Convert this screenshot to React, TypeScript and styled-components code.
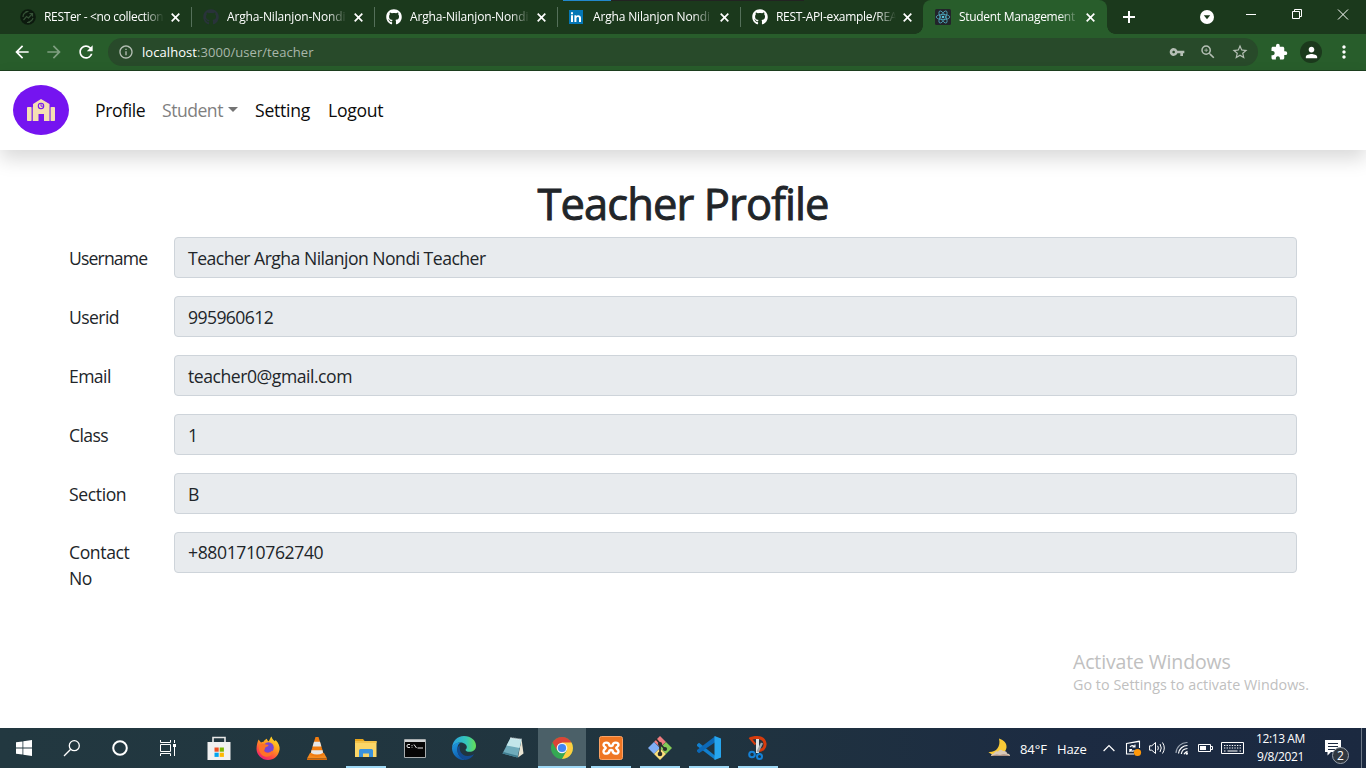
import React from "react";
import styled, { createGlobalStyle } from "styled-components";
import { FaGithub } from "react-icons/fa";
import {
  MdArrowBack, MdArrowForward, MdRefresh, MdInfoOutline, MdVpnKey, MdZoomIn,
  MdStarBorder, MdExtension, MdPerson, MdMoreVert,
} from "react-icons/md";

const Global = createGlobalStyle`
  * { box-sizing: border-box; }
  body { margin: 0; background: #fff; overflow: hidden; font-family: "Open Sans", "Noto Sans", sans-serif; }
  svg { display: block; flex: none; }
`;

const Screen = styled.div`
  width: 1366px;
  height: 768px;
  display: flex;
  flex-direction: column;
  overflow: hidden;
  position: relative;
`;

/* ---------- browser ---------- */

const TabStrip = styled.div`
  height: 34px;
  flex: none;
  display: flex;
  padding-left: 9px;
  background: #1b391c;
  position: relative;
`;

const TopEdge = styled.div`
  position: absolute;
  top: 0;
  left: 563px;
  width: 241px;
  height: 1px;
  background: linear-gradient(90deg, #2288cc 48px, #222322 48px);
`;

const TabBox = styled.div<{ $active?: boolean }>`
  width: 183px;
  height: 34px;
  display: flex;
  align-items: center;
  padding: 0 9px 0 11px;
  position: relative;
  color: #fff;
  ${(p) => p.$active && `
    width: 184px;
    background: #285d2b;
    border-radius: 8px 8px 0 0;
    margin-left: -1px;
    padding-left: 12px;
    &::before, &::after {
      content: ""; position: absolute; bottom: 0; width: 8px; height: 8px;
    }
    &::before { left: -8px; background: radial-gradient(circle at 0 0, transparent 7.5px, #285d2b 8px); }
    &::after { right: -8px; background: radial-gradient(circle at 8px 0, transparent 7.5px, #285d2b 8px); }
  `}
`;

const TabDivider = styled.div`
  position: absolute;
  right: 0;
  top: 7px;
  width: 1px;
  height: 20px;
  background: #55705a;
`;

const TabIcon = styled.div`
  width: 16px;
  height: 16px;
  margin-right: 8px;
  flex: none;
`;

const TabTitle = styled.div<{ $spacing: number }>`
  width: 125px;
  margin-right: 2px;
  flex: none;
  font-size: 12px;
  line-height: 16px;
  letter-spacing: ${(p) => p.$spacing}px;
  white-space: nowrap;
  -webkit-mask-image: linear-gradient(90deg, #000 100px, transparent 120px);
  mask-image: linear-gradient(90deg, #000 100px, transparent 120px);
`;

const NewTab = styled.svg`
  margin: 11px 0 0 16px;
`;

const WindowControls = styled.div`
  margin-left: auto;
  display: flex;
  padding-right: 16px;
`;

const Toolbar = styled.div`
  height: 37px;
  flex: none;
  display: flex;
  align-items: center;
  gap: 12px;
  background: #285d2b;
  border-bottom: 1px solid #1d401f;
  color: #fff;
  padding: 0 12px;
`;

const AddressBar = styled.div`
  width: 1150px;
  height: 28px;
  border-radius: 14px;
  background: #284a2a;
  display: flex;
  align-items: center;
  gap: 14px;
  padding: 0 9px 0 10px;
  color: #b5bfb5;
`;

const Url = styled.div`
  margin-left: -6px;
  font-size: 13px;
  letter-spacing: 0.06px;
  flex: 1;
  color: #a9b7aa;
  b { font-weight: 400; color: #fff; }
`;

const Avatar = styled.div`
  width: 22px;
  height: 22px;
  border-radius: 50%;
  background: #1b391c;
  display: flex;
  align-items: center;
  justify-content: center;
`;

/* ---------- page ---------- */

const Page = styled.main`
  flex: 1;
  background: #fff;
  color: #212529;
`;

const Navbar = styled.nav`
  height: 79px;
  display: flex;
  align-items: center;
  padding: 0 0 2px 13px;
  box-shadow: 0 9px 18px rgba(0, 0, 0, 0.15);
`;

const NavItem = styled.a<{ $muted?: boolean; $width: number; $spacing: number }>`
  width: ${(p) => p.$width}px;
  font-size: 17.6px;
  line-height: 26px;
  white-space: nowrap;
  letter-spacing: ${(p) => p.$spacing}px;
  color: ${(p) => (p.$muted ? "#7f7f7f" : "#0b0b0b")};
  display: flex;
  align-items: center;
`;

const Caret = styled.span`
  border: 5.5px solid transparent;
  border-top-color: #747474;
  border-bottom: 0;
  margin-left: 5px;
`;

const Title = styled.h1`
  margin: 28px 0 7px;
  height: 52px;
  text-align: center;
  font-size: 43.5px;
  line-height: 52px;
  font-weight: 400;
  -webkit-text-stroke: 0.9px #212529;
  letter-spacing: -0.9px;
`;

const Form = styled.form`
  padding: 0 69px;
  font-size: 17.6px;
`;

const Row = styled.div`
  display: flex;
  height: 41px;
  margin-bottom: 18px;
`;

const Label = styled.label<{ $spacing: number; $raise?: boolean }>`
  width: 105px;
  padding: ${(p) => (p.$raise ? 7 : 8)}px 26px 0 0;
  line-height: 26px;
  letter-spacing: ${(p) => p.$spacing}px;
`;

const Field = styled.div<{ $spacing: number; $raise?: boolean }>`
  flex: 1;
  height: 41px;
  padding: ${(p) => (p.$raise ? 6 : 7)}px 13px;
  line-height: 26px;
  border: 1px solid #ced4da;
  border-radius: 4px;
  background: #e8ebee;
  letter-spacing: ${(p) => p.$spacing}px;
`;

const Watermark = styled.div`
  position: absolute;
  left: 1073px;
  top: 650px;
  color: #c0c0c0;
  font-size: 19.5px;
  line-height: 24px;
  letter-spacing: -0.15px;
  white-space: nowrap;
  small { display: block; font-size: 14.3px; line-height: 21px; letter-spacing: 0.05px; }
`;

/* ---------- taskbar ---------- */

const Taskbar = styled.footer`
  height: 40px;
  flex: none;
  display: flex;
  background: linear-gradient(90deg, #223840 0%, #20343f 50%, #1c2b42 78%, #1b2940 100%);
`;

const TaskButton = styled.div<{ $open?: boolean; $active?: boolean; $app?: boolean }>`
  width: ${(p) => (p.$app ? 49 : 48)}px;
  padding-right: ${(p) => (p.$app ? 1 : 0)}px;
  height: 40px;
  display: flex;
  align-items: center;
  justify-content: center;
  position: relative;
  background: ${(p) => (p.$active ? "linear-gradient(90deg, #4b6068 48px, transparent 48px)" : "transparent")};
  &::after {
    content: "";
    display: ${(p) => (p.$open ? "block" : "none")};
    position: absolute;
    bottom: 0;
    left: ${(p) => (p.$active ? 0 : 4)}px;
    right: ${(p) => (p.$active ? 1 : 5)}px;
    height: 2px;
    background: #9ed8f5;
  }
`;

const AppList = styled.div`
  display: flex;
  margin-left: 3px;
`;

const Tray = styled.div`
  margin-left: auto;
  display: flex;
  align-items: center;
  color: #fff;
  font-size: 13px;
`;

const TrayText = styled.span<{ $width: number; $spacing: number }>`
  width: ${(p) => p.$width}px;
  letter-spacing: ${(p) => p.$spacing}px;
  white-space: nowrap;
  padding-top: 1px;
`;

const TraySlot = styled.div<{ $width: number }>`
  width: ${(p) => p.$width}px;
  display: flex;
  justify-content: center;
`;

const Clock = styled.div`
  width: 68px;
  padding-right: 5px;
  text-align: center;
  font-size: 12px;
  line-height: 18px;
  letter-spacing: -0.4px;
`;

const Notice = styled.div`
  width: 44px;
  height: 40px;
  position: relative;
  padding: 12px 0 0 8px;
`;

const Badge = styled.div`
  position: absolute;
  left: 15px;
  top: 19px;
  width: 17px;
  height: 17px;
  border-radius: 50%;
  border: 1px solid #9aa3ad;
  background: #30373f;
  font-size: 12px;
  line-height: 15px;
  text-align: center;
`;

const DesktopEdge = styled.div`
  width: 5px;
  height: 40px;
  border-left: 1px solid #6d7887;
`;

/* ---------- drawings ---------- */

const CloseGlyph = () => (
  <svg width="9" height="9" viewBox="0 0 9 9" fill="none" stroke="#fff" strokeWidth="1.7">
    <path d="M.7.700l7.600 7.600M8.300.700L.7 8.300" />
  </svg>
);

const Rester = () => (
  <svg width="16" height="16" viewBox="0 0 16 16">
    <circle cx="8" cy="8" r="7.8" fill="#0c1a0e" />
    <g fill="none" stroke="#365237" strokeWidth="1.2">
      <path d="M3.500 11L6.500 7.500l2 1.500L12 5M9.500 4.500h3v3M3 8q0-4 4.500-5.300M13 9q-1 3.500-5 4.300M5.500 2.500h3M7 13.500h3" />
    </g>
  </svg>
);

const LinkedIn = () => (
  <svg width="16" height="16" viewBox="0 -1 16 16">
    <path fill="#0477b5" d="M0 0h14v14H0z" />
    <path fill="#fff" d="M2 5.3h2V12H2zM2 2.2h2v2H2zM5.400 5.300h1.900v.9c.9-1.500 4.700-1.700 4.700 1.800v4h-2V8.500c0-2.200-2.600-1.900-2.600 0V12h-2z" />
  </svg>
);

const ReactMark = () => (
  <svg width="16" height="16" viewBox="0 0 16 16">
    <rect width="16" height="16" rx="1.5" fill="#22242a" />
    <g fill="none" stroke="#4fa9bf" strokeWidth="0.8">
      <ellipse cx="8" cy="8" rx="6.8" ry="2.6" />
      <ellipse cx="8" cy="8" rx="6.8" ry="2.6" transform="rotate(60 8 8)" />
      <ellipse cx="8" cy="8" rx="6.8" ry="2.6" transform="rotate(120 8 8)" />
    </g>
    <circle cx="8" cy="8" r="1.3" fill="#58c4dc" />
  </svg>
);

const WindowGlyphs = () => (
  <svg width="150" height="34" viewBox="0 0 150 34">
    <circle cx="7" cy="17" r="7" fill="#fff" />
    <path d="M3.800 15.200h6.400l-3.200 4z" fill="#1b391c" />
    <g fill="none" stroke="#fff" strokeWidth="1">
      <path d="M46 14.500h10M92.500 11.500h7v7h-7zM94.500 11.500v-2h7v7h-2M138 9.500l10 10M148 9.500l-10 10" />
    </g>
  </svg>
);

const SchoolLogo = styled.svg`
  margin-right: 26px;
`;

const School = () => (
  <SchoolLogo width="56" height="50" viewBox="0 0 56 50">
    <ellipse cx="28" cy="25" rx="28" ry="25" fill="#7514f0" />
    <g fill="#f5deb3">
      <path d="M20 19L28 14l8.500 5V36H31v-7h-5.500v7H20z" />
      <rect x="14" y="22" width="4.600" height="14" rx="0.8" />
      <rect x="37.600" y="22" width="4.400" height="14" rx="0.8" />
    </g>
    <path d="M19.200 22v14M37 22v14" stroke="#ad7dd0" strokeWidth="0.7" />
    <circle cx="28" cy="21" r="2.700" fill="#f5deb3" stroke="#7514f0" strokeWidth="1.100" />
    <path d="M28 19v2.200h1.900" fill="none" stroke="#7514f0" strokeWidth="0.9" />
  </SchoolLogo>
);

const WindowsLogo = () => (
  <svg width="16" height="16" viewBox="0 0 16 16" fill="#fff">
    <path d="M0 2.300l6.500-.9v6.200H0zM7.300 1.300L16 0v7.600H7.300zM0 8.400h6.500v6.200L0 13.700zM7.300 8.400H16V16l-8.700-1.300z" />
  </svg>
);
const SearchGlyph = () => (
  <svg width="18" height="18" viewBox="0 0 18 18" fill="none" stroke="#fff" strokeWidth="1.300">
    <circle cx="11.300" cy="6.700" r="5" /><path d="M7.700 10.300L1 17" />
  </svg>
);
const CortanaGlyph = () => (
  <svg width="18" height="18" viewBox="0 0 18 18"><circle cx="9" cy="9" r="6.800" fill="none" stroke="#fff" strokeWidth="2" /></svg>
);
const TaskViewGlyph = () => (
  <svg width="16" height="16" viewBox="0 0 16 16" fill="none" stroke="#fff" strokeWidth="1">
    <path d="M.5 0v2.500h10V0M.5 4.500h10v7H.5zM.5 16v-2.500h10V16M14.500 0v3M14.500 7v9" />
    <path d="M13 4h3v3h-3z" fill="#fff" stroke="none" />
  </svg>
);
const StoreIcon = () => (
  <svg width="24" height="26" viewBox="0 0 24 26">
    <path d="M6 9V2.500h12V9" fill="none" stroke="#e8e8e8" strokeWidth="1.600" />
    <path d="M0.500 7h23v18h-23z" fill="#f1f1f1" />
    <path d="M7.500 12.500h4.200v4.200H7.500z" fill="#f04f22" /><path d="M12.700 12.500h4.200v4.200h-4.200z" fill="#7db700" />
    <path d="M7.500 17.700h4.200v4.200H7.500z" fill="#03a4ee" /><path d="M12.700 17.700h4.200v4.200h-4.200z" fill="#fdb900" />
  </svg>
);
const FirefoxIcon = () => (
  <svg width="24" height="24" viewBox="0 0 24 24">
    <defs>
      <linearGradient id="fx" x1="0.800" y1="0" x2="0.200" y2="1">
        <stop offset="0" stopColor="#ffe226" /><stop offset="0.400" stopColor="#ff9a1f" />
        <stop offset="0.720" stopColor="#ff4a42" /><stop offset="1" stopColor="#e31587" />
      </linearGradient>
    </defs>
    <path d="M2.500 3.500L5 6.500c.8-.5 1.700-.7 2.500-.7C8.500 4 10 3 11 2.800c0 1 .6 2 1.800 2.500C14 3 14.500 1.500 15.500.5c.6 2.500 2.200 3.600 3.500 4.800l.6-1.300c3 3 4.400 6.500 4 9.500C22.500 20 18 24 12 24S.6 19 .5 13C.5 9 1.500 6 2.500 3.500z" fill="url(#fx)" />
    <circle cx="12.500" cy="11.500" r="5.300" fill="#7846d2" />
    <path d="M3 9c4-2.500 6-.5 8.500-.2 1.500.2 1.500 1.500-2 2.500-1 2-1 3-1.800 4 2 2.500 6.500 2.200 8.300-.8 1.500 4-3 7-7 6C4.500 19.500 2 14 3 9z" fill="#ff7228" />
  </svg>
);
const VlcIcon = () => (
  <svg width="22" height="24" viewBox="0 0 22 24">
    <path d="M4 17h14l3 5.500H1z" fill="#f58a1f" /><path d="M1 22.500h20V24H1z" fill="#d96a08" />
    <path d="M9.500 1h3L18 19q-7 3.500-14 0z" fill="#f17c10" />
    <path d="M8 5.800h6l1.400 4.600H6.600zM5.400 14.300h11.200L17 17q-6 3-12 0z" fill="#e7e7e7" />
  </svg>
);
const FolderIcon = () => (
  <svg width="22" height="20" viewBox="0 0 22 20">
    <path d="M0 1h8l2 2.500H0z" fill="#e7a51b" /><path d="M0 3h21.500v16H0z" fill="#fcd667" />
    <path d="M0 3h21.500v2H0z" fill="#f4c34a" />
    <path d="M4 19v-6.500q0-1.500 1.500-1.500h11q1.500 0 1.500 1.500V19h-4v-3.500H8V19z" fill="#3a92dd" />
  </svg>
);
const TerminalIcon = () => (
  <svg width="22" height="19" viewBox="0 0 22 19">
    <path d="M.5.5h21v18H.5z" fill="#060606" stroke="#a8adaf" />
    <path d="M1 1h20v2H1z" fill="#cfd3d4" />
    <path d="M6 5.500H4Q3 5.500 3 7t1 1.500h2M8 6v.9M8 7.800v.8M10 5.500l2.500 3.500M13.500 9H19" fill="none" stroke="#e6e6e6" />
  </svg>
);
const EdgeIcon = () => (
  <svg width="24" height="24" viewBox="0 0 24 24">
    <defs>
      <linearGradient id="eg"><stop offset="0" stopColor="#289fe2" /><stop offset="0.600" stopColor="#35c7b8" /><stop offset="1" stopColor="#65df54" /></linearGradient>
      <linearGradient id="eb" x1="0" y1="0" x2="0.500" y2="1"><stop offset="0" stopColor="#1f9de3" /><stop offset="1" stopColor="#0e59ad" /></linearGradient>
    </defs>
    <path d="M0 12C.5 5 5 0 12 0c7 0 12 4.500 12 9.800 0 4-3 6-6.500 6-2.500 0-4-1-4-1.800 0-.8 1.300-1 1.300-3 0-2-2.300-4.500-6.300-4.500C4 6.500 1 9 0 12z" fill="url(#eg)" />
    <path d="M0 12c1-3.500 4-5.500 8.500-5.500C6 8 5 11 5.500 15c.7 4.500 4 8 8 8.800C6 25 0 19 0 12z" fill="url(#eb)" />
    <path d="M8 9c-1.500 5 1.500 11 7.500 11 3 0 5-1 6.500-2-1.500 3.500-4.500 5.500-8.500 5.900C8 23 3.500 16 6 11z" fill="#134b91" />
  </svg>
);
const NotesIcon = () => (
  <svg width="24" height="24" viewBox="0 0 24 24">
    <path d="M20.500 3L22.500 17.500 17 21.500z" fill="#e9e4d3" />
    <path d="M9.500 2L20.500 3.500 16.500 21.500l-15-4z" fill="#6fabbb" /><path d="M9.500 2L20.500 3.500 18.500 12 5.500 9.500z" fill="#c3e6ea" />
    <path d="M1.500 17.500l15 4 .4-1.700L2.400 16z" fill="#3f7c8f" />
    <path d="M9.500 2L20.500 3.500" stroke="#e9eef0" strokeWidth="1.800" strokeDasharray="1 1" />
  </svg>
);
const ChromeIcon = () => (
  <svg width="22" height="22" viewBox="0 0 22 22">
    <circle cx="11" cy="11" r="11" fill="#35a853" />
    <path d="M11 11L1.500 5.500A11 11 0 0 1 20.500 5.500z" fill="#db4437" />
    <path d="M11 5.500h9.500A11 11 0 0 1 11 22l4.800-8.500z" fill="#ffcd40" />
    <path d="M1.500 5.500L6 13.500 11 6z" fill="#db4437" />
    <circle cx="11" cy="11" r="5.300" fill="#f3f3f3" /><circle cx="11" cy="11" r="4.100" fill="#4285f4" />
  </svg>
);
const XamppIcon = () => (
  <svg width="24" height="24" viewBox="0 0 24 24">
    <rect x="0.500" y="0.500" width="23" height="23" rx="2" fill="#ef7623" stroke="#f9a265" />
    <path d="M10.500 9.500C10 5.500 4.500 6 4.500 9c0 1.500 1.500 1.500 2.300 3C6 13.500 4.500 13.500 4.500 15.500c0 3 5.500 3 6-1M13.500 9.500C14 5.500 19.500 6 19.500 9c0 1.500-1.500 1.500-2.300 3 .8 1.500 2.300 1.500 2.300 3.500 0 3-5.500 3-6-1M10.500 9.500q1.500 1 3 0M10.500 14.500q1.500-1 3 0" fill="none" stroke="#fff" strokeWidth="2.400" strokeLinecap="round" strokeLinejoin="round" />
  </svg>
);
const GitIcon = () => (
  <svg width="24" height="24" viewBox="0 0 24 24">
    <path d="M12 0l6 6-6 5-6-5z" fill="#f07c80" /><path d="M6 6l6 6-6 6-6-6z" fill="#80aef6" />
    <path d="M18 6l6 6-6 6-6-6z" fill="#85ca57" /><path d="M12 12l6 6-6 6-6-6z" fill="#fbdf7b" />
    <g fill="none" stroke="#292b2b" strokeWidth="1.700"><path d="M8 3l4 4.500V19M12 8l5 5" /></g>
    <g fill="#292b2b"><circle cx="12" cy="8" r="2.100" /><circle cx="12" cy="18" r="2.300" /><circle cx="17" cy="13" r="2.100" /></g>
  </svg>
);
const CodeIcon = () => (
  <svg width="24" height="24" viewBox="0 0 24 24">
    <path d="M0 8.500l2-1.700L18.500 20v4L0 10z" fill="#1280cf" />
    <path d="M0 15.500l2 1.700L18.500 6V0L0 14z" fill="#0c69b8" />
    <path d="M17.500 0L24 2.500v19L17.500 24z" fill="#26a5ee" />
  </svg>
);
const SnipIcon = () => (
  <svg width="20" height="24" viewBox="0 0 20 24">
    <path d="M3 2.500C8 .5 16 1 17 7.500c.5 4-2.500 7.500-7.500 7" fill="none" stroke="#d63b0d" strokeWidth="3" />
    <path d="M1.500 1.500l6 7" stroke="#d63b0d" strokeWidth="2" />
    <path d="M9.500 3v14" stroke="#dfe2e3" strokeWidth="3" /><path d="M14 7L9.500 16" stroke="#9ea5a8" strokeWidth="2.400" />
    <g fill="none" stroke="#1581d6" strokeWidth="2"><circle cx="4" cy="18.500" r="2.800" /><circle cx="11.500" cy="20.500" r="2.500" /></g>
  </svg>
);
const MoonIcon = () => (
  <svg width="23" height="22" viewBox="0 0 23 22">
    <path d="M11 1.500c5 1.500 8 5 7.500 9C18 15 14 18 8 18c-3.500 0-6.500-1.500-7.500-3C8 15.500 13 10 11 1.500z" fill="#f8c936" />
    <path d="M3 19q0-2.500 3-2.500 1-3 4-2 2-3 5-.5 4-.5 4 2.500 3 0 3 2.500z" fill="#d9c9b8" />
    <path d="M3 19q5-2.500 9-1 5-2 10 1z" fill="#a98f82" />
  </svg>
);

const strokeProps = { fill: "none", stroke: "#fff", strokeWidth: 1.2 };
const ChevronGlyph = () => <svg width="12" height="8" viewBox="0 0 12 8" {...strokeProps}><path d="M.6 7L6 1.500 11.400 7" /></svg>;
const UpdateGlyph = () => (
  <svg width="17" height="18" viewBox="0 0 17 18" {...strokeProps}>
    <path d="M9 15H1.500V4.500l13-2V9M1.500 4.500l13-2.500M5 8q2-2.500 4.500-.5M10 5.500V8H7.500M9.500 11.500q-2.500 1.500-4.500-.5M4.800 13V10.500H7" strokeWidth="1.1" />
    <circle cx="12.500" cy="13.500" r="3.600" fill="#ff990a" stroke="none" />
  </svg>
);
const SpeakerGlyph = () => (
  <svg width="17" height="14" viewBox="0 0 17 14" {...strokeProps} strokeWidth={1}>
    <path d="M.6 4.800h2.200L6.500 1.500v11L2.800 9.200H.6zM8.700 4.800q1.300 2.200 0 4.400M11 3q2.500 4 0 8M13.500 1.500q3.600 5.500 0 11" />
  </svg>
);
const WifiGlyph = () => (
  <svg width="14" height="14" viewBox="0 0 14 14" {...strokeProps}>
    <path d="M1 12A11 11 0 0 1 12.500 1.500" stroke="#9aa4b1" /><path d="M3.500 12.500A9 9 0 0 1 12.500 4.500M6.300 13A6.500 6.500 0 0 1 12.500 7.500M9 13.300Q10 11 12.500 10.300" />
    <circle cx="11.800" cy="12.500" r="1.200" fill="#fff" stroke="none" />
  </svg>
);
const BatteryGlyph = () => (
  <svg width="16" height="10" viewBox="0 0 16 10" {...strokeProps} strokeWidth={1}>
    <path d="M.5 1.500h12v7H.5zM12.500 3.500h2v3h-2" /><path d="M2 3h6v4H2z" fill="#fff" stroke="none" />
  </svg>
);
const KeyboardGlyph = () => (
  <svg width="24" height="14" viewBox="0 0 24 14" {...strokeProps} strokeWidth={1}>
    <path d="M.5 1.500h22v11H.5z" /><path d="M3 4.500h18M3 7h18" strokeDasharray="1.300 1.300" /><path d="M3 10h1.500M6.500 10h10M18.500 10H20" />
  </svg>
);
const NoticeGlyph = () => (
  <svg width="16" height="16" viewBox="0 0 16 16">
    <path d="M0 0h16v12H6l-3.500 3.500V12H0z" fill="#fff" />
    <path d="M3 3.500h10M3 6.500h10M3 9.500h7" stroke="#1b2940" />
  </svg>
);

/* ---------- content ---------- */

const tabs = [
  { title: "RESTer - <no collection", icon: <Rester />, spacing: -0.33 },
  { title: "Argha-Nilanjon-Nondi", icon: <FaGithub size={16} color="#29333a" />, spacing: -0.16 },
  { title: "Argha-Nilanjon-Nondi", icon: <FaGithub size={16} color="#fff" />, spacing: -0.16 },
  { title: "Argha Nilanjon Nondi", icon: <LinkedIn />, spacing: -0.16 },
  { title: "REST-API-example/REA", icon: <FaGithub size={16} color="#fff" />, spacing: -0.3 },
  { title: "Student Management", icon: <ReactMark />, spacing: -0.3 },
];

const fields = [
  { label: "Username", value: "Teacher Argha Nilanjon Nondi Teacher", ls: -0.85, vs: -0.52 },
  { label: "Userid", value: "995960612", ls: -0.6, vs: -0.6 },
  { label: "Email", value: "teacher0@gmail.com", ls: -0.6, vs: -0.47 },
  { label: "Class", value: "1", ls: -0.6, vs: 0 },
  { label: "Section", value: "B", ls: -0.4, vs: 0 },
  { label: "Contact No", value: "+8801710762740", ls: -0.4, vs: -0.4, raise: true },
];

const apps = [
  { icon: <StoreIcon /> }, { icon: <FirefoxIcon /> }, { icon: <VlcIcon /> },
  { icon: <FolderIcon />, open: true }, { icon: <TerminalIcon /> }, { icon: <EdgeIcon /> },
  { icon: <NotesIcon /> }, { icon: <ChromeIcon />, open: true, active: true },
  { icon: <XamppIcon />, open: true }, { icon: <GitIcon />, open: true },
  { icon: <CodeIcon />, open: true }, { icon: <SnipIcon />, open: true },
];

export default function App() {
  return (
    <Screen>
      <Global />
      <TabStrip>
        <TopEdge />
        {tabs.map((t, i) => (
          <TabBox key={i} $active={i === 5}>
            <TabIcon>{t.icon}</TabIcon>
            <TabTitle $spacing={t.spacing}>{t.title}</TabTitle>
            <CloseGlyph />
            {i < 4 && <TabDivider />}
          </TabBox>
        ))}
        <NewTab width="12" height="12" viewBox="0 0 12 12" stroke="#fff" strokeWidth="2">
          <path d="M6 0v12M0 6h12" />
        </NewTab>
        <WindowControls><WindowGlyphs /></WindowControls>
      </TabStrip>
      <Toolbar>
        <MdArrowBack size={20} />
        <MdArrowForward size={20} color="#7f9f81" />
        <MdRefresh size={20} />
        <AddressBar>
          <MdInfoOutline size={16} />
          <Url><b>localhost</b>:3000/user/teacher</Url>
          <MdVpnKey size={16} />
          <MdZoomIn size={18} />
          <MdStarBorder size={18} />
        </AddressBar>
        <MdExtension size={18} />
        <Avatar><MdPerson size={17} /></Avatar>
        <MdMoreVert size={20} />
      </Toolbar>
      <Page>
        <Navbar>
          <School />
          <NavItem $width={67} $spacing={-0.4}>Profile</NavItem>
          <NavItem $width={93} $spacing={-0.5} $muted>Student<Caret /></NavItem>
          <NavItem $width={73} $spacing={-0.25}>Setting</NavItem>
          <NavItem $width={70} $spacing={-0.3}>Logout</NavItem>
        </Navbar>
        <Title>Teacher Profile</Title>
        <Form>
          {fields.map((f) => (
            <Row key={f.label}>
              <Label $spacing={f.ls} $raise={f.raise}>{f.label}</Label>
              <Field $spacing={f.vs} $raise={f.raise}>{f.value}</Field>
            </Row>
          ))}
        </Form>
      </Page>
      <Watermark>Activate Windows<small>Go to Settings to activate Windows.</small></Watermark>
      <Taskbar>
        <TaskButton><WindowsLogo /></TaskButton>
        <TaskButton><SearchGlyph /></TaskButton>
        <TaskButton><CortanaGlyph /></TaskButton>
        <TaskButton><TaskViewGlyph /></TaskButton>
        <AppList>
          {apps.map((a, i) => (
            <TaskButton key={i} $app $open={a.open} $active={a.active}>{a.icon}</TaskButton>
          ))}
        </AppList>
        <Tray>
          <TraySlot $width={41}><MoonIcon /></TraySlot>
          <TrayText $width={37} $spacing={-0.1}>84°F</TrayText>
          <TrayText $width={40} $spacing={-0.1}>Haze</TrayText>
          <TraySlot $width={24}><ChevronGlyph /></TraySlot>
          <TraySlot $width={24}><UpdateGlyph /></TraySlot>
          <TraySlot $width={24}><SpeakerGlyph /></TraySlot>
          <TraySlot $width={26}><WifiGlyph /></TraySlot>
          <TraySlot $width={22}><BatteryGlyph /></TraySlot>
          <TraySlot $width={32}><KeyboardGlyph /></TraySlot>
          <Clock>12:13 AM<br />9/8/2021</Clock>
          <Notice><NoticeGlyph /><Badge>2</Badge></Notice>
          <DesktopEdge />
        </Tray>
      </Taskbar>
    </Screen>
  );
}
